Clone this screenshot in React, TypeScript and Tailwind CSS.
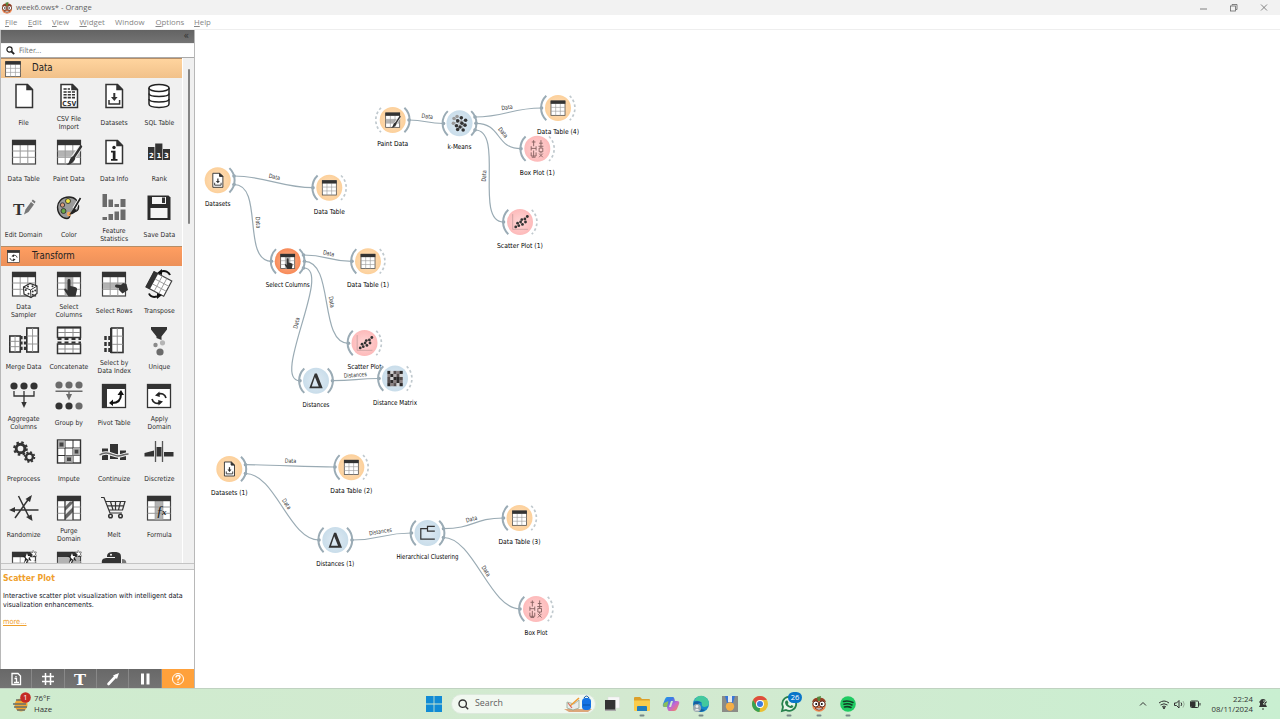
import React from "react";

const DARK = "#333333";

type GlyphProps = { name: string };

function Grid({ shade }: { shade?: "row" | "col" }) {
  return (
    <g>
      <rect x="-11.5" y="-11.5" width="23" height="23.5" fill="#fff" stroke="#444" strokeWidth="1.2" />
      {shade === "row" && <rect x="-11" y="-0.8" width="22" height="5.6" fill="#b3b3b3" />}
      {shade === "col" && <rect x="-3.6" y="-7" width="7.2" height="18.5" fill="#b3b3b3" />}
      <path d="M-3.8-7V12M3.8-7V12M-11.5-1H11.5M-11.5 5.3H11.5" stroke="#9a9a9a" strokeWidth="1" fill="none" />
      <rect x="-12" y="-12.2" width="24" height="5.4" fill={DARK} />
    </g>
  );
}

function Page() {
  return <path d="M-8-11.5H3.5L8.5-6.5V11.5H-8ZM3-11.5V-6.5H8.5" fill="#fff" stroke={DARK} strokeWidth="1.5" />;
}

function Fold() {
  return <path d="M3-12L9-6.5V-6H3Z" fill={DARK} />;
}

function Brush() {
  return (
    <g>
      <path d="M11.5-5L4 6" stroke="#f0f0f0" strokeWidth="4.5" />
      <path d="M12-5.5L5 5" stroke={DARK} strokeWidth="2.4" strokeLinecap="round" />
      <path d="M5.5 4C7 6 6 8 4.5 9.5C2.5 12 0 13-2.5 12.5C0 11.5 0 9.5 1 7.5C2 5 3.5 3.8 5.5 4Z" fill={DARK} />
    </g>
  );
}

function Hand() {
  return (
    <path
      d="M-1.5-3.5C-1.5-5.5 1.5-5.5 1.5-3.5V2L6 3Q8.500 3.500 8 6L6.500 12.500H-.5L-4.500 6.500Q-5.500 4.500-3.500 4.500L-1.500 6.500Z"
      fill={DARK}
    />
  );
}

function Swap() {
  return (
    <g fill="none" stroke="#222" strokeWidth="1.7">
      <path d="M-1-3.5C2-5.5 6-4 7 0" />
      <path d="M1 4.5C-2 6.5-6 5-7 1" />
      <path d="M-4-2.5L.5-6.5L.8-1Z M4 3.5L-.5 7.5L-.8 2Z" fill="#222" stroke="none" />
    </g>
  );
}

function MiniTable({ x, y, w, h }: { x: number; y: number; w: number; h: number }) {
  return (
    <g>
      <rect x={x} y={y} width={w} height={h} fill="#fff" stroke={DARK} strokeWidth="1.6" />
      <path d={`M${x + w / 2} ${y}v${h}M${x} ${y + h / 3}h${w}M${x} ${y + (2 * h) / 3}h${w}`} stroke="#8c8c8c" strokeWidth=".9" />
    </g>
  );
}

function Gear({ cx, cy, r }: { cx: number; cy: number; r: number }) {
  return (
    <g transform={`translate(${cx} ${cy})`}>
      <circle r={r * 0.62} fill="none" stroke={DARK} strokeWidth={r * 0.42} />
      <circle r={r * 0.9} fill="none" stroke={DARK} strokeWidth={r * 0.3} strokeDasharray={`${r * 0.36} ${r * 0.347}`} />
    </g>
  );
}

function Wand() {
  return (
    <g>
      <path d="M4-6L-5 12" stroke={DARK} strokeWidth="3" />
      <path d="M3-5L-4 10" stroke="#fff" strokeWidth="1.2" />
      <path d="M3-12.500L4.500-9L8-9.500L5.500-6.500L7.500-3L3.500-4.500L.5-2L1-6L-2-8L2-8.500Z" fill="#222" />
      <path d="M3-11L4-8L6.500-8L4.500-6L5-4L2.500-5.500L1.500-7Z" fill="#fff" />
      <path d="M9-14L10-11.500L13-12L11-10L13-7.500L10-8.500L8-7L8.500-9.500L6.500-11.500L9-11.500ZM10-4L11-2L13-1" fill="#fff" stroke="#777" strokeWidth=".7" strokeDasharray="1.2 .8" />
    </g>
  );
}

function Glyph({ name }: GlyphProps) {
  switch (name) {
    case "file":
      return (<g><Page /><Fold /></g>);
    case "csv":
      return (
        <g>
          <Page /><Fold />
          <path d="M-5.5-7H1M-5.5-4H6M-5.5-1.2H6M-5.5 1.6H6" stroke={DARK} strokeWidth="1.6" strokeDasharray="3.2 1" />
          <text y="9.8" x=".3" fontSize="7" fontWeight="bold" textAnchor="middle" fill={DARK} fontFamily="DejaVu Sans, sans-serif" textLength="14" lengthAdjust="spacingAndGlyphs">CSV</text>
        </g>
      );
    case "datasets":
      return (
        <g>
          <Page /><Fold />
          <path d="M.3-3V2" stroke={DARK} strokeWidth="2" />
          <path d="M-3 1H3.6L.3 5Z" fill={DARK} />
          <path d="M-5 4V8H5.6V4" fill="none" stroke={DARK} strokeWidth="1.5" />
        </g>
      );
    case "sql":
      return (
        <g fill="#fff" stroke="#222" strokeWidth="1.5">
          <path d="M-10-8V8C-10 12.5 10 12.5 10 8V-8" />
          <path d="M-10-2.5C-10 1.5 10 1.5 10-2.5M-10 3C-10 7 10 7 10 3" fill="none" />
          <ellipse cx="0" cy="-8" rx="10" ry="3.5" />
        </g>
      );
    case "table":
      return <Grid />;
    case "paint":
      return (<g><Grid shade="row" /><Brush /></g>);
    case "info":
      return (
        <g>
          <Page /><Fold />
          <circle cx="0" cy="-4.5" r="1.7" fill="#222" />
          <path d="M-3-1.2H1.5V7H3.5V8.7H-3V7H-1.2V.6H-3Z" fill="#222" />
        </g>
      );
    case "rank":
      return (
        <g>
          <path d="M-11-5H-4.5V8H-11ZM-3.8-8.5H3.4V8H-3.8ZM4-3H11V8H4Z" fill={DARK} />
          <g fontSize="7" fontWeight="bold" fill="#fff" textAnchor="middle" fontFamily="DejaVu Sans, sans-serif">
            <text x="-7.5" y="5.5">2</text><text x="0" y="5.5">1</text><text x="7.5" y="5.5">3</text>
          </g>
        </g>
      );
    case "edit":
      return (
        <g>
          <text x="-11" y="6.5" fontSize="17" fontWeight="bold" fill={DARK} fontFamily="Liberation Serif, serif">T</text>
          <path d="M0 6.500L1.500 1.500L7-6L10-3.500L4.500 4Z" fill="#777" /><path d="M7.600-7L8.800-8.500L11.500-6.500L10.700-4.500Z" fill="#777" />
        </g>
      );
    case "color":
      return (
        <g>
          <path d="M0-11C-8-11-11.5-5-11.5-1C-11.5 6-7 10.5-2 10.5C2 10.5 0 6.5 2 5C4 3.5 9 5 9.5 0C10-7 6-11 0-11Z" fill="#9b9b9b" stroke="#222" strokeWidth="1.3" />
          <circle cx="-1" cy="-7" r="2.5" fill="#f2e642" stroke="#333" strokeWidth=".9" />
          <circle cx="-6.5" cy="-3" r="2.2" fill="#d99a78" stroke="#333" strokeWidth=".9" />
          <circle cx="-5.5" cy="3" r="2.5" fill="#67a844" stroke="#333" strokeWidth=".9" />
          <circle cx="0" cy="6" r="2.2" fill="#f5a659" />
          <path d="M11.5-10L5 1" stroke="#fff" strokeWidth="3.5" /><path d="M11.5-10L5 1" stroke="#222" strokeWidth="1.7" />
          <path d="M5 0L7.5 2C5 6 3 7 0 6.5C2 5 3 2 5 0Z" fill="#222" />
        </g>
      );
    case "stats":
      return (
        <g fill="#6b6b6b">
          <path d="M-11.5-14H-7V-1H-11.5ZM-5.5-8.5H-1V-1H-5.5ZM.5-4H5V-1H.5ZM6.5-9H11.5V-1H6.5Z" />
          <path d="M-11.5 9H-7V12H-11.5ZM-5.5 6H-1V12H-5.5ZM.5 3.5H5V12H.5ZM6.5 1.5H11.5V12H6.5Z" />
        </g>
      );
    case "save":
      return (
        <g>
          <path d="M-11.5-12.5H9.5L11.5-10.5V12H-11.5Z" fill="#2b2b2b" />
          <rect x="-7" y="-11" width="14" height="7" fill="#f5f5f5" /><rect x="3" y="-10.5" width="3" height="5.5" fill="#333" />
          <rect x="-8.5" y="0" width="17" height="10" fill="#f5f5f5" />
        </g>
      );
    case "sampler":
      return (
        <g>
          <Grid />
          <path d="M-.5 3L6-.5L13 2V9.500L7 13.500L0 10Z" fill="#fff" stroke={DARK} strokeWidth="1.2" />
          <path d="M-.5 3L6.500 6L13 2M6.500 6L7 13.500" stroke={DARK} strokeWidth="1" fill="none" />
          <g fill={DARK}><circle cx="4" cy="2.500" r="1" /><circle cx="8.500" cy="2.200" r="1" /><circle cx="1.800" cy="6" r="1" /><circle cx="4.500" cy="9.800" r="1" /><circle cx="8.700" cy="7.500" r="1" /><circle cx="11.200" cy="6.500" r="1" /><circle cx="8.800" cy="10.800" r="1" /></g>
        </g>
      );
    case "selcols":
      return (<g><Grid shade="col" /><Hand /></g>);
    case "selrows":
      return (<g><Grid shade="row" /><path d="M2 .5Q0 2 2 3.500L5 4L5 6L8.500 9.500L14 6L12.500 0L9-1L7 1Z" fill={DARK} /></g>);
    case "transpose":
      return (
        <g>
          <g transform="rotate(28) scale(.86)">
            <rect x="-11.5" y="-10" width="23" height="20" fill="#fff" stroke="#444" strokeWidth="1.4" />
            <path d="M-6.5-3H11.5M-6.5 3.5H11.5M-1-10V10M5-10V10" stroke="#999" strokeWidth="1" />
            <rect x="-12.5" y="-10.5" width="6" height="21" fill={DARK} />
          </g>
          <path d="M2-12.5C6-14 10-12 11-9M-2 12.5C-6 13.5-9 12-10 9.5" stroke="#111" strokeWidth="2" fill="none" />
          <path d="M-2-11L3-15V-9ZM3 11L-2 15V9Z" fill="#111" />
        </g>
      );
    case "merge":
      return (
        <g>
          <MiniTable x={-14.2} y={-4} w={10.5} h={16} /><MiniTable x={2.8} y={-12} w={11.5} h={24} />
          <path d="M-2.5-4V12M1-4V12" stroke={DARK} strokeWidth="2.2" strokeDasharray="3.2 2.2" />
        </g>
      );
    case "concat":
      return (
        <g>
          <rect x="-11.5" y="-12.5" width="23" height="10" fill="#fff" stroke={DARK} strokeWidth="1.5" /><rect x="-11.5" y="4" width="23" height="9.5" fill="#fff" stroke={DARK} strokeWidth="1.5" />
          <path d="M-4-12V-3M4-12V-3M-11-7.5H11M-4 5V13M4 5V13M-11 9H11" stroke="#8c8c8c" />
          <path d="M-11.5-1H12M-11.5 2.5H12" stroke={DARK} strokeWidth="2.2" strokeDasharray="4 3" />
          <path d="M-12-12.5H12" stroke={DARK} strokeWidth="2" />
        </g>
      );
    case "selidx":
      return (
        <g>
          <MiniTable x={-2.5} y={-12} w={11.5} h={24.5} />
          <path d="M-8.5-4V12.5M-4.5-4V12.5" stroke={DARK} strokeWidth="2.5" strokeDasharray="4 2" />
          <path d="M-3-12V13" stroke={DARK} strokeWidth="2" />
        </g>
      );
    case "unique":
      return (
        <g>
          <path d="M-8-13H8V-10.5L2.5-3.5V0L-2.5-2V-3.5L-8-10.5Z" fill={DARK} />
          <circle cx="-3.5" cy="5" r="2.2" fill="#8a8a8a" /><circle cx="3.5" cy="2.8" r="2.6" fill="#b5b5b5" /><circle cx="1" cy="12" r="3.6" fill="#6b6b6b" />
        </g>
      );
    case "aggregate":
      return (
        <g>
          <g fill={DARK}><circle cx="-10" cy="-10" r="3.6" /><circle cx="0" cy="-10" r="3.6" /><circle cx="10" cy="-10" r="3.6" /><path d="M-2.7 6H2.7L0 12Z" /></g>
          <path d="M-10-5V0H10V-5M0-5V8" fill="none" stroke={DARK} strokeWidth="1.3" />
        </g>
      );
    case "group":
      return (
        <g>
          <g fill="#6b6b6b"><circle cx="-10" cy="-11" r="3.6" /><circle cx="0" cy="-11" r="3.6" /><circle cx="10" cy="-11" r="3.6" /><circle cx="10" cy="10" r="3.6" /><path d="M-3-2H3L0 4.5Z" /></g>
          <circle cx="-10" cy="10" r="3.6" fill={DARK} /><circle cx="0" cy="10" r="3.6" fill={DARK} />
          <path d="M-13.5-4.8H13.5M0-4.8V0" stroke="#6b6b6b" strokeWidth="1.4" />
        </g>
      );
    case "pivot":
      return (
        <g>
          <rect x="-11.5" y="-11.5" width="23" height="23" fill="#fff" stroke={DARK} strokeWidth="1.3" />
          <path d="M-12-12H12V-7H-7V12H-12Z" fill={DARK} />
          <path d="M-2 7C4 7 7 4 7-2" fill="none" stroke="#111" strokeWidth="2" />
          <path d="M3.5-1L7-6L10-1ZM-1 3.5V10L-5 7Z" fill="#111" />
        </g>
      );
    case "apply":
      return (
        <g>
          <rect x="-11.5" y="-11.5" width="23" height="23" fill="#fff" stroke={DARK} strokeWidth="1.3" />
          <rect x="-12" y="-12" width="24" height="5" fill={DARK} />
          <g transform="translate(0 2)"><Swap /></g>
        </g>
      );
    case "preprocess":
      return (<g><Gear cx={-3.5} cy={-3.5} r={7} /><Gear cx={5.5} cy={5} r={5.5} /></g>);
    case "impute":
      return (
        <g>
          <rect x="-11.5" y="-12" width="23" height="23" fill="#fff" stroke={DARK} strokeWidth="1.4" />
          <path d="M-4-12V11M4-12V11M-11.5-4H11.5M-11.5 3.5H11.5" stroke={DARK} strokeWidth="1" />
          <path d="M-11-11.5H-4V-4H-11ZM4-4H11V3.5H4ZM-4 3.5H4V10.5H-4Z" fill="#aaa" />
          <path d="M-9.5-9.5H-5.5V-5.5H-9.5ZM5.7-2.3H9.3V1.5H5.7ZM-2 5.5H2V9H-2Z" fill="#444" />
        </g>
      );
    case "continuize":
      return (
        <g>
          <path d="M-12-3.5H-6V8H-12ZM-4-8H4V7H-4ZM6-1.5H12V8H6Z" fill={DARK} />
          <path d="M-14.5 3C-7-2-1 4 4 4C8 4 10 2 14.5 2" fill="none" stroke="#f0f0f0" strokeWidth="3.5" />
          <path d="M-14.5 3C-7-2-1 4 4 4C8 4 10 2 14.5 2" fill="none" stroke="#666" strokeWidth="1.5" />
        </g>
      );
    case "discretize":
      return (
        <g fill={DARK}>
          <path d="M-14.5 1L-5-1.5V4.5H-14.5ZM-2.5-5H2.5V4.5H-2.5ZM5 0H14.5V4.5H5Z" />
          <path d="M-3.5-11V10M3.5-11V10" stroke="#555" strokeWidth="1.3" />
        </g>
      );
    case "randomize":
      return (
        <g fill="none" stroke={DARK} strokeWidth="1.5">
          <path d="M-5.5-12L6 11M-9 10L6-11M-13 2H14.5" />
          <path d="M8-13L1.5-9L6-6ZM8.5 13L2 9L7.5 6.5ZM-15 2L-9-1V4.5Z" fill={DARK} stroke="none" />
        </g>
      );
    case "purge":
      return (
        <g>
          <Grid /><rect x="-4" y="-6.5" width="8" height="18" fill="#eee" />
          <path d="M-4-1L1-6.5H4V-5L-4 3ZM-4 7L4-1V4L-4 12Z" fill="#666" />
          <path d="M-4-7V12M4-7V12" stroke={DARK} strokeWidth="1.2" />
        </g>
      );
    case "melt":
      return (
        <g fill="none" stroke={DARK} strokeWidth="1.5">
          <path d="M-13-10.5H-10L-4 5H8M-8-6.5H11L8.5 2H-5.5M-7-2.2H10M-3.5-6.5L-1 2M1.5-6.5V2M6.5-6.5L4.5 2" strokeWidth="1.2" />
          <circle cx="-3.5" cy="8" r="1.8" /><circle cx="6.5" cy="8" r="1.8" />
        </g>
      );
    case "formula":
      return (
        <g>
          <Grid shade="col" />
          <text x="-3" y="8" fontSize="15" fontStyle="italic" fill="#222" fontFamily="Liberation Serif, serif">ƒ</text>
          <text x="3" y="7" fontSize="9" fontStyle="italic" fontWeight="bold" fill="#222" fontFamily="Liberation Serif, serif">x</text>
        </g>
      );
    case "wand":
      return (<g><Grid /><Wand /></g>);
    case "wandshade":
      return (<g><Grid shade="row" /><rect x="-11" y="-7" width="22" height="8" fill="#b3b3b3" /><Wand /></g>);
    case "python":
      return (
        <g>
          <path d="M0-12C7-12 7-10 7-5V0H-12C-13-5-10-6-7-6H1V-7H-7C-7-11-5-12 0-12Z" fill={DARK} /><path d="M8-5C12-5 13-3 12 3H2V0H8Z" fill="#777" />
          <circle cx="-3" cy="-9.3" r="1" fill="#fff" />
        </g>
      );
    case "kmeans": {
      const p = [[-9, -8], [-4, -11], [-10, 0], [-3, -4], [3, -9], [10, -5], [4, 0], [-5, 4], [9, 3], [1, 6], [-3, 10], [6, 11]];
      return (<g><path d="M-9-8L3-3L10-5M-10 0L3-3L3-9M-5 4L3-3L9 3M-3 10L3-3L6 11" stroke="#888" strokeWidth="1" fill="none" />{p.map(([x, y], i) => <circle key={i} cx={x} cy={y} r="2.9" fill={i < 3 ? "#999" : DARK} />)}</g>);
    }
    case "scatter": {
      const p = [[-7, 8], [-2, 6], [-4, 2], [1, 0], [4, 4], [3, -4], [9, 0], [8, -5], [12, -9]];
      return (<g><path d="M-12-13V12H13" fill="none" stroke="#c09a9a" strokeWidth="1.2" />{p.map(([x, y], i) => <circle key={i} cx={x} cy={y} r="2.3" fill={DARK} />)}</g>);
    }
    case "box":
      return (
        <g fill="none" stroke="#84605f" strokeWidth="1.5">
          <path d="M-6-14V-4M-9-11H-3M-10-4V3M-2-4V3M-10-.5H-2M-6 3V13M-10 6V12H-2V6M-9 14H-3" />
          <path d="M6-14V-1M3-9H9M2-4H10M3-1V5H9V-1ZM6 5V8M3 8L9 14M9 8L3 14" />
        </g>
      );
    case "delta":
      return <path d="M-11 12.500L-2-12H1.500L11 12.500ZM-7 9.500H4.500L-1.800-6Z" fill={DARK} fillRule="evenodd" />;
    case "matrix": {
      const rows = ["40214", "14320", "20442", "24141", "41204"];
      const shades = ["#d5d5d5", "#8b8181", "#554d4d", "#b5b0b0", "#2c2929"];
      return <g>{rows.flatMap((r, j) => r.split("").map((c, i) => <rect key={`${i}${j}`} x={-12.5 + i * 5} y={-12.5 + j * 5} width="5.2" height="5.2" fill={shades[+c]} />))}</g>;
    }
    case "hier":
      return <path d="M12-11H0V-3H12M0-7H-11V10H12" fill="none" stroke={DARK} strokeWidth="2" />;
    default:
      return null;
  }
}

const dataTools: [string, string][] = [
  ["file", "File"], ["csv", "CSV File\nImport"], ["datasets", "Datasets"], ["sql", "SQL Table"],
  ["table", "Data Table"], ["paint", "Paint Data"], ["info", "Data Info"], ["rank", "Rank"],
  ["edit", "Edit Domain"], ["color", "Color"], ["stats", "Feature\nStatistics"], ["save", "Save Data"],
];
const transformTools: [string, string][] = [
  ["sampler", "Data\nSampler"], ["selcols", "Select\nColumns"], ["selrows", "Select Rows"], ["transpose", "Transpose"],
  ["merge", "Merge Data"], ["concat", "Concatenate"], ["selidx", "Select by\nData Index"], ["unique", "Unique"],
  ["aggregate", "Aggregate\nColumns"], ["group", "Group by"], ["pivot", "Pivot Table"], ["apply", "Apply\nDomain"],
  ["preprocess", "Preprocess"], ["impute", "Impute"], ["continuize", "Continuize"], ["discretize", "Discretize"],
  ["randomize", "Randomize"], ["purge", "Purge\nDomain"], ["melt", "Melt"], ["formula", "Formula"],
  ["wand", ""], ["wandshade", ""], ["python", ""],
];

function ToolGrid({ items }: { items: [string, string][] }) {
  return (
    <div className="grid w-[181px] grid-cols-4">
      {items.map(([icon, label]) => (
        <div key={icon} className="flex h-14 flex-col items-center pt-1">
          <svg className="h-7 w-8 shrink-0 overflow-visible" viewBox="-16 -14 32 28"><Glyph name={icon} /></svg>
          <div className="mt-1 flex h-[18px] items-center justify-center text-center text-[6.8px] leading-[8px] whitespace-pre text-[#2c2c2c]">{label}</div>
        </div>
      ))}
    </div>
  );
}

type Node = { x: number; y: number; t: string; g: string; k: "data" | "blue" | "pink" | "sel"; l: 0 | 1 | 2; r: 0 | 1 | 2; w: number };
const nodes: Node[] = [
  { x: 392.7, y: 120, t: "Paint Data", g: "paint", k: "data", l: 2, r: 1, w: 31 },
  { x: 459.5, y: 123.3, t: "k-Means", g: "kmeans", k: "blue", l: 1, r: 1, w: 24 },
  { x: 558, y: 108, t: "Data Table (4)", g: "table", k: "data", l: 1, r: 2, w: 42 },
  { x: 537.3, y: 148.7, t: "Box Plot (1)", g: "box", k: "pink", l: 1, r: 2, w: 35 },
  { x: 520, y: 222, t: "Scatter Plot (1)", g: "scatter", k: "pink", l: 1, r: 2, w: 46 },
  { x: 217.7, y: 180.3, t: "Datasets", g: "datasets", k: "data", l: 0, r: 1, w: 25.5 },
  { x: 329.3, y: 187.7, t: "Data Table", g: "table", k: "data", l: 1, r: 2, w: 31 },
  { x: 287.7, y: 261.3, t: "Select Columns", g: "selcols", k: "sel", l: 1, r: 1, w: 44 },
  { x: 368, y: 261.3, t: "Data Table (1)", g: "table", k: "data", l: 1, r: 2, w: 42 },
  { x: 364.5, y: 343, t: "Scatter Plot", g: "scatter", k: "pink", l: 1, r: 2, w: 34 },
  { x: 316, y: 380.7, t: "Distances", g: "delta", k: "blue", l: 1, r: 1, w: 27 },
  { x: 395, y: 378.5, t: "Distance Matrix", g: "matrix", k: "blue", l: 1, r: 2, w: 44 },
  { x: 229.3, y: 469, t: "Datasets (1)", g: "datasets", k: "data", l: 0, r: 1, w: 36.5 },
  { x: 351.3, y: 467.3, t: "Data Table (2)", g: "table", k: "data", l: 1, r: 2, w: 42 },
  { x: 335.3, y: 540, t: "Distances (1)", g: "delta", k: "blue", l: 1, r: 1, w: 38 },
  { x: 427.5, y: 533, t: "Hierarchical Clustering", g: "hier", k: "blue", l: 1, r: 1, w: 62 },
  { x: 519.5, y: 518, t: "Data Table (3)", g: "table", k: "data", l: 1, r: 2, w: 42 },
  { x: 536, y: 609, t: "Box Plot", g: "box", k: "pink", l: 1, r: 2, w: 23 },
];

type Link = { a: [number, number]; b: [number, number]; t: string; p: [number, number, number] };
const links: Link[] = [
  { a: [409, 120], b: [443.5, 123.5], t: "Data", p: [427.3, 116.5, 7] },
  { a: [475, 117], b: [541.5, 108], t: "Data", p: [507, 107.5, -9] },
  { a: [476, 123.3], b: [521, 148.7], t: "Data", p: [503, 132.5, 50] },
  { a: [475, 130], b: [503.5, 222], t: "Data", p: [484, 176, -87] },
  { a: [234, 176], b: [313, 187.7], t: "Data", p: [274.5, 177, 11] },
  { a: [234, 184.5], b: [271.5, 261.3], t: "Data", p: [258, 222.5, 84] },
  { a: [303.5, 255], b: [352, 261.3], t: "Data", p: [328.7, 253.5, 11] },
  { a: [304.5, 261.3], b: [348.5, 343.3], t: "Data", p: [331.5, 302, 81] },
  { a: [303.5, 268], b: [300, 380.7], t: "Data", p: [296.5, 323, -77] },
  { a: [332.5, 380.7], b: [379, 378.5], t: "Distances", p: [355.3, 375, -4] },
  { a: [245.5, 464.7], b: [335, 467], t: "Data", p: [290.5, 461, 2] },
  { a: [245.5, 473.5], b: [319, 540], t: "Data", p: [286.5, 504, 56] },
  { a: [352, 540], b: [411.5, 533], t: "Distances", p: [380.5, 531.5, -10] },
  { a: [443.5, 528.7], b: [503.5, 518], t: "Data", p: [471.5, 519, -15] },
  { a: [443.5, 537.5], b: [520, 609], t: "Data", p: [486, 571, 58] },
];

function curve({ a, b }: Link) {
  const c = Math.min(30, Math.hypot(b[0] - a[0], b[1] - a[1]) / 2);
  return `M${a[0]} ${a[1]}C${a[0] + c} ${a[1]} ${b[0] - c} ${b[1]} ${b[0]} ${b[1]}`;
}

function Workflow() {
  return (
    <svg className="h-full w-full" viewBox="195 30 1085 658" fontFamily="DejaVu Sans Condensed, DejaVu Sans, sans-serif">
      <defs>
        <radialGradient id="data"><stop offset="0" stopColor="#ffe2c0" /><stop offset="1" stopColor="#fcd09b" /></radialGradient>
        <radialGradient id="blue"><stop offset="0" stopColor="#dfeaf3" /><stop offset="1" stopColor="#c9ddea" /></radialGradient>
        <radialGradient id="pink"><stop offset="0" stopColor="#ffd6d6" /><stop offset="1" stopColor="#fdbaba" /></radialGradient>
        <radialGradient id="sel"><stop offset="0" stopColor="#ffb993" /><stop offset="1" stopColor="#f78a58" /></radialGradient>
      </defs>
      {links.map((l, i) => (
        <g key={i}>
          <path d={curve(l)} fill="none" stroke="#9aabb4" strokeWidth="1.2" />
          <circle cx={l.a[0]} cy={l.a[1]} r="1.8" fill="#95a6b1" />
          <circle cx={l.b[0]} cy={l.b[1]} r="1.8" fill="#95a6b1" />
          <text transform={`translate(${l.p[0]} ${l.p[1]}) rotate(${l.p[2]})`} y="2" fontSize="6" textAnchor="middle" fill="#333" textLength={l.t === "Data" ? 11.5 : 23} lengthAdjust="spacingAndGlyphs">{l.t}</text>
        </g>
      ))}
      {nodes.map((n) => (
        <g key={n.t} transform={`translate(${n.x} ${n.y})`}>
          <circle r="13" fill={`url(#${n.k})`} />
          {n.l > 0 && <path d="M-11.7-12.2A16.9 16.9 0 0 0-11.7 12.2" fill="none" stroke={n.l === 1 ? "#9aabb5" : "#c0c9ce"} strokeWidth={n.l === 1 ? 2 : 1.7} strokeDasharray={n.l === 2 ? "2.6 2.4" : undefined} />}
          {n.r > 0 && <path d="M11.7-12.2A16.9 16.9 0 0 1 11.7 12.2" fill="none" stroke={n.r === 1 ? "#9aabb5" : "#c0c9ce"} strokeWidth={n.r === 1 ? 2 : 1.7} strokeDasharray={n.r === 2 ? "2.6 2.4" : undefined} />}
          <g transform="scale(.61)"><Glyph name={n.g} /></g>
          <text y="26.100" fontSize="6.8" textAnchor="middle" fill="#000" textLength={n.w} lengthAdjust="spacingAndGlyphs">{n.t}</text>
        </g>
      ))}
    </svg>
  );
}

function Mascot() {
  return (
    <g>
      <circle cx="8" cy="9" r="6.8" fill="#ef8650" />
      <path d="M1 6Q3 1 8 2Q13 1 15 6L8 5Z" fill="#983f24" /><path d="M7 5L6 1L10 0L9 5Z" fill="#54883e" />
      <circle cx="4.800" cy="8" r="3" fill="#fff" stroke="#59281c" /><circle cx="11.200" cy="8" r="3" fill="#fff" stroke="#59281c" />
      <circle cx="5.2" cy="8" r="1" /><circle cx="10.8" cy="8" r="1" />
      <path d="M4 12H12Q8 16 4 12Z" fill="#fff" stroke="#59281c" strokeWidth=".7" />
    </g>
  );
}

const icon = "h-4 w-4 overflow-visible";

function TaskIcons() {
  return (
    <div className="flex items-center gap-[13.5px]">
      <svg className={icon} viewBox="0 0 16 16"><path d="M4 1H15.500V12H4Z" fill="#f7f7f7" stroke="#ddd" strokeWidth=".5" /><path d="M1 4H12V15H1Z" fill="#aaa" /><path d="M1 4H11V13.500H1Z" fill="#333" /></svg>
      <svg className={icon} viewBox="0 0 16 16"><path d="M0 2Q0 1 1 1H6L8 3H15Q16 3 16 4V8H0Z" fill="#dca02a" /><path d="M0 4.5H16V14Q16 15 15 15H1Q0 15 0 14Z" fill="#fbcc4b" /><path d="M3 11Q3 10 4 10H12Q13 10 13 11V15H3Z" fill="#237dbd" /><path d="M6.500 19.5H9.500" stroke="#788" strokeWidth="2" strokeLinecap="round" /></svg>
      <svg className={icon} viewBox="0 0 16 16">
        <defs><linearGradient id="cp" x1="0" y1="0" x2="1" y2="1"><stop stopColor="#15a3e8" /><stop offset=".35" stopColor="#4178e4" /><stop offset=".6" stopColor="#c266d6" /><stop offset="1" stopColor="#ff8a43" /></linearGradient></defs>
        <path d="M4 1H10Q11 1 11.5 3L12 5H14Q17 5 16 8L14 13Q13 15 11 15H6Q5 15 4.5 13L4 11H2Q-1 11 0 8L2 3Q3 1 4 1ZM8 5L6 11H8L10 5Z" fill="url(#cp)" fillRule="evenodd" /><path d="M1 7L0 9Q0 11 2 11H4L5.5 5Z" fill="#8ac05a" />
      </svg>
      <svg className={icon} viewBox="0 0 16 16"><circle cx="8" cy="8" r="8" fill="#1688ca" /><path d="M1 5Q4-1 10 0Q16 2 16 8Q15 11 11 11Q8 10 9 8Q8 4 1 5Z" fill="#43c99d" /><path d="M5 8Q5 13 12 14Q9 17 4 15Q-1 11 1 6Q5 4 9 7Q6 6 5 8Z" fill="#155f9f" /><circle cx="4" cy="12" r="4" fill="#9da9af" /><circle cx="4" cy="10.5" r="1.4" fill="#eee" /><path d="M1.5 14.5Q4 11 6.5 14.5Z" fill="#eee" /><path d="M6.500 19.5H9.500" stroke="#788" strokeWidth="2" strokeLinecap="round" /></svg>
      <svg className={icon} viewBox="0 0 16 16"><path d="M0 0H16V16H0Z" fill="#8b8c87" /><path d="M3 0H13L11 7H5Z" fill="#3777d8" /><path d="M6 0H10V6H6Z" fill="#e3e9ee" /><circle cx="8" cy="10.5" r="4.2" fill="#f5ae45" /></svg>
      <svg className={icon} viewBox="0 0 16 16"><circle cx="8" cy="8" r="8" fill="#eabf32" /><path d="M1.1 4A8 8 0 0 1 14.9 4H8L4.5 10Z" fill="#dd4c3e" /><path d="M1.1 4L4.7 10L8 12L7.5 16A8 8 0 0 1 1.1 4Z" fill="#35a154" /><circle cx="8" cy="8" r="4" fill="#fff" /><circle cx="8" cy="8" r="3" fill="#3c7be0" /></svg>
      <div className="relative h-4 w-4">
        <svg className={icon} viewBox="0 0 16 16"><path d="M1 15L2 11A7 7 0 1 1 5 14Z" fill="#e8f5e9" stroke="#26814c" strokeWidth="1.8" /><path d="M5 4.5L6.5 4.5L7.5 7L6.7 8Q8 10 9.5 10L10.5 9L12.5 10Q12 12.5 9.5 12Q4 10.5 4 6Z" fill="#26814c" /><path d="M6.500 19.5H9.500" stroke="#788" strokeWidth="2" strokeLinecap="round" /></svg>
        <span className="absolute -top-[4px] left-[7px] flex h-[11px] w-[14px] items-center justify-center rounded-full bg-[#0875c9] text-[7.5px] leading-none text-white">26</span>
      </div>
      <svg className={icon} viewBox="0 0 16 16"><Mascot /><path d="M6.500 19.5H9.500" stroke="#788" strokeWidth="2" strokeLinecap="round" /></svg>
      <svg className={icon} viewBox="0 0 16 16"><circle cx="8" cy="8" r="7.8" fill="#1fcb62" /><path d="M3.5 5.5Q8 4 13 6.5M4 8.3Q8 7 12 9M4.5 11Q8 10 11 11.5" fill="none" stroke="#123d24" strokeWidth="1.6" strokeLinecap="round" /><path d="M6.500 19.5H9.500" stroke="#788" strokeWidth="2" strokeLinecap="round" /></svg>
    </div>
  );
}

function CategoryHeader({ label, name, tone }: { label: string; name: string; tone: string }) {
  return (
    <div className={`flex h-5 w-[181px] items-center border-t border-[#b58d66] text-[9.6px] text-[#222] ${tone}`}>
      <span className="flex w-[31px] pl-1">
        {name === "table"
          ? <svg className="h-4 w-4" viewBox="-12.5 -12.5 25 25"><Glyph name={name} /></svg>
          : <svg className="ml-[2px] h-[13px] w-[13px]" viewBox="-12.5 -12.5 25 25"><Glyph name={name} /></svg>}
      </span>
      <span>{label}</span>
    </div>
  );
}

export default function App() {
  return (
    <div className="flex h-[719px] w-[1280px] flex-col overflow-hidden bg-white font-['Open_Sans','Noto_Sans',sans-serif]">
      <header className="flex h-[15px] shrink-0 items-center bg-[#f2f2f2] pl-px text-[#606060]">
        <svg className="h-3 w-3" viewBox="0 0 16 16"><Mascot /></svg>
        <span className="ml-[3px] text-[7.6px]">week6.ows* - Orange</span>
        <svg className="mr-[11px] ml-auto h-[10px] w-[70px]" viewBox="0 0 70 10" fill="none" stroke="#666" strokeWidth=".8"><path d="M1 6H8M62 1.500L68 7.500M68 1.500L62 7.500M33 2.500V1.500H38V6.500H37" /><rect x="31.5" y="3" width="5" height="5" /></svg>
      </header>
      <nav className="flex h-[15px] shrink-0 items-center border-b border-[#eee] pt-[2px] pl-[5px] text-[7.8px] text-[#858585]">
        <span className="w-[23px]"><u>F</u>ile</span><span className="w-[24px]"><u>E</u>dit</span><span className="w-[27.5px]"><u>V</u>iew</span><span className="w-[35.5px]"><u>W</u>idget</span><span className="w-[40.5px]">Window</span><span className="w-[38.5px]"><u>O</u>ptions</span><span><u>H</u>elp</span>
      </nav>
      <main className="flex h-[658px] shrink-0">
        <aside className="flex w-[195px] shrink-0 flex-col border-r border-l border-[#b8b8b8] bg-[#f0f0f0] font-['DejaVu_Sans_Condensed','DejaVu_Sans',sans-serif]">
          <div className="flex h-[13px] shrink-0 items-center justify-end bg-linear-to-b from-[#636363] to-[#747474] pr-[5px] text-[10px] leading-none text-[#303030]"><span className="-mt-px">«</span></div>
          <div className="mt-px flex h-[14px] shrink-0 items-center border-b border-[#aaa] bg-white pl-[5px] text-[7.5px] text-[#777]">
            <svg className="mr-[4px] h-[9px] w-[9px]" viewBox="0 0 9 9" fill="none" stroke="#222"><circle cx="3.5" cy="3.5" r="2.6" strokeWidth="1.2" /><path d="M5.5 5.5L8.2 8.2" strokeWidth="1.8" /></svg>Filter...
          </div>
          <div className="flex h-[505px] shrink-0 overflow-hidden">
            <div className="w-[181px]">
              <CategoryHeader label="Data" name="table" tone="bg-linear-to-b from-[#ffd49e] to-[#f1c18a]" />
              <ToolGrid items={dataTools} />
              <CategoryHeader label="Transform" name="apply" tone="bg-linear-to-b from-[#ff9e61] to-[#ec9059]" />
              <ToolGrid items={transformTools} />
            </div>
            <div className="w-[12px] border-l border-white pt-[11px] pl-[5px]"><div className="h-[155px] w-[2px] rounded bg-[#858585]" /></div>
          </div>
          <div className="h-[7px] shrink-0 border-y border-[#c4c4c4] bg-[#eee]" />
          <section className="h-[99px] shrink-0 bg-white pt-[3px] pl-[2px] text-[7.05px] leading-[9px] text-[#10101c]">
            <h2 className="h-[18px] text-[8.6px] leading-[11px] font-bold text-[#efa02c]">Scatter Plot</h2>
            <p className="whitespace-pre">{"Interactive scatter plot visualization with intelligent data\nvisualization enhancements."}</p>
            <p className="mt-[8px] text-[7.4px] text-[#efa02c] underline">more...</p>
          </section>
          <div className="-ml-px grid h-[19px] w-[194px] shrink-0 grid-cols-6 divide-x divide-[#888] bg-linear-to-b from-[#686868] to-[#747474]">
            {["info", "grid", "text", "arrow", "pause", "help"].map((n) => (
              <div key={n} className={`flex items-center justify-center ${n === "help" ? "bg-[#ffa13b]" : ""}`}>
                <svg className="h-4 w-4 overflow-visible" viewBox="0 0 16 16" fill="none" stroke="#fff" strokeWidth="1.3">
                  {n === "info" && <g><path d="M4 2.5H10L12.5 5V13.5H4Z" /><path d="M6.5 7.5H8.5V11.5M6 11.5H11M8 5V6.3" /></g>}
                  {n === "grid" && <path d="M5.5 2V14M10.5 2V14M2 5.5H14M2 10.5H14" strokeWidth="1.5" />}
                  {n === "text" && <text x="8" y="13.5" fontFamily="DejaVu Serif, serif" fontSize="15" fontWeight="bold" stroke="none" fill="#fff" textAnchor="middle" textLength="12" lengthAdjust="spacingAndGlyphs">T</text>}
                  {n === "arrow" && <g><path d="M3.500 13L11 5" strokeWidth="2.6" strokeLinecap="round" /><path d="M8 4.500L14 2L12 8Z" fill="#fff" stroke="none" /></g>}
                  {n === "pause" && <path d="M5.5 2.5V13.5M11 2.5V13.5" strokeWidth="3" />}
                  {n === "help" && <g><circle cx="8" cy="8" r="5.5" strokeWidth="1" /><path d="M6 6.5Q6 4.5 8 4.5Q10 4.5 10 6.2Q10 7.3 8 8.5V9.5M8 10.7V12" /></g>}
                </svg>
              </div>
            ))}
          </div>
        </aside>
        <div className="h-full w-[1085px]"><Workflow /></div>
      </main>
      <footer className="flex h-[31px] shrink-0 items-center border-t border-[#c0d2c1] bg-linear-to-r from-[#cfeccf] via-[#d3e9d0] to-[#c9efd1] text-[7.8px] text-[#333]">
        <div className="flex w-[426px] items-center pl-3">
          <svg className="h-5 w-[20px] overflow-visible" viewBox="0 0 20 20"><circle cx="9" cy="11" r="6.5" fill="#f1a532" /><path d="M4 6H14M1 10H14M2 13H15M5 16H13" stroke="#66706e" strokeWidth="1.3" /><circle cx="13.5" cy="3.5" r="5.3" fill="#c42b25" /><text x="13.5" y="6.2" textAnchor="middle" fontSize="7.5" fill="#fff">1</text></svg>
          <div className="ml-[2px] leading-[11px]"><div>76°F</div><div>Haze</div></div>
        </div>
        <svg className="h-4 w-4" viewBox="0 0 16 16"><path d="M0 0H7.6V7.6H0ZM8.4 0H16V7.6H8.4ZM0 8.4H7.6V16H0ZM8.4 8.4H16V16H8.4Z" fill="#118bd5" /></svg>
        <div className="mr-[8px] ml-[9px] flex h-5 w-[145px] items-center overflow-hidden rounded-full border border-[#dce9dc] bg-[#f1f8f0] pl-[6px] text-[8.8px] text-[#606060]">
          <svg className="mr-[6px] h-[11px] w-[11px]" viewBox="0 0 11 11" fill="none" stroke="#333" strokeWidth="1.4"><circle cx="4.7" cy="4.7" r="3.7" /><path d="M7.5 7.5L10.2 10.2" /></svg>Search
          <svg className="mr-[3px] ml-auto h-[18px] w-7" viewBox="0 0 28 18"><path d="M0 14H28L24 17H5Z" fill="#dca77a" /><path d="M3 7L10 9L15 5V13L9 15L3 13Z" fill="#e8eceb" stroke="#8aa18b" strokeWidth=".7" /><path d="M6 11L15 3" stroke="#ef9a31" strokeWidth="1.5" /><path d="M4 8L8 13" stroke="#d76a58" strokeWidth="1.2" /><rect x="18" y="3" width="9" height="12" rx="3.500" fill="#1472e4" /><path d="M20 3Q22.5-1 25 3M19 10H26" stroke="#0751a5" fill="none" /></svg>
        </div>
        <TaskIcons />
        <div className="mr-[12px] ml-auto flex items-center">
          <svg className="h-3 w-[62px]" viewBox="0 0 62 12" fill="none" stroke="#333" strokeWidth="1"><path d="M1 7.5L4 4.5L7 7.5" /><path d="M20 5Q25 1 30 5M21.5 7Q25 4.5 28.5 7M23 9Q25 7 27 9" /><circle cx="25" cy="10" r=".7" fill="#333" /><path d="M35.5 5H37.5L40 2.5V10L37.5 7.5H35.5ZM42 4.5Q43.5 6 42 8" /><path d="M44 3Q46.500 6 44 9.500" stroke="#9ab09c" /><rect x="51.500" y="3" width="8" height="6.5" rx="1" /><path d="M52.500 4H56V8.5H52.500Z" fill="#333" /><path d="M61 5V7.5" /></svg>
          <div className="ml-[10px] w-[42px] text-right leading-[10.5px] whitespace-nowrap"><div>22:24</div><div>08/11/2024</div></div>
          <svg className="ml-[5px] h-3 w-[10px]" viewBox="0 0 10 12"><path d="M1 9L2 7V4Q2 1 5 1Q8 1 8 4V7L9 9Z" fill="#333" /><path d="M4 11H6M1 4L9 4" stroke="#333" strokeWidth="1" /><path d="M5 3H8L5 6H8" stroke="#d2eed3" fill="none" strokeWidth=".8" /></svg>
        </div>
      </footer>
    </div>
  );
}
